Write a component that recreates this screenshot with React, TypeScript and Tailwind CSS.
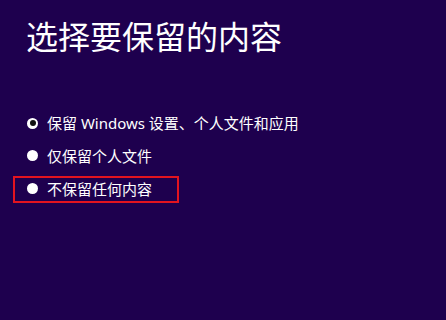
const options = [
  { label: "保留 Windows 设置、个人文件和应用", checked: true },
  { label: "仅保留个人文件", checked: false },
  { label: "不保留任何内容", checked: false, highlight: true },
];

function Radio({ checked }: { checked: boolean }) {
  return (
    <span className="flex h-[11px] w-[11px] shrink-0 items-center justify-center rounded-full bg-white">
      {checked ? <span className="h-[6px] w-[6px] rounded-full bg-[#111]" /> : null}
    </span>
  );
}

export default function App() {
  return (
    <div
      className="h-[320px] w-[446px] overflow-hidden bg-[#1e004e] text-white"
      style={{ fontFamily: '"Noto Sans", "Noto Sans CJK SC", sans-serif' }}
    >
      <h1 className="pl-[26px] pt-[21px] text-[32px] leading-[32px] font-normal">选择要保留的内容</h1>
      <div className="mt-[54px] flex flex-col">
        {options.map((opt) => (
          <div key={opt.label} className="flex h-[32.5px] items-center">
            <div
              className={
                opt.highlight
                  ? "ml-[13px] mt-[3px] flex h-[27px] w-[166px] items-center gap-[9px] border-2 border-[#e3141f] pb-[2px] pl-[12px]"
                  : "ml-[27px] flex items-center gap-[9px]"
              }
            >
              <Radio checked={opt.checked} />
              <span className="text-[15px] leading-[20px]">{opt.label}</span>
            </div>
          </div>
        ))}
      </div>
    </div>
  );
}
